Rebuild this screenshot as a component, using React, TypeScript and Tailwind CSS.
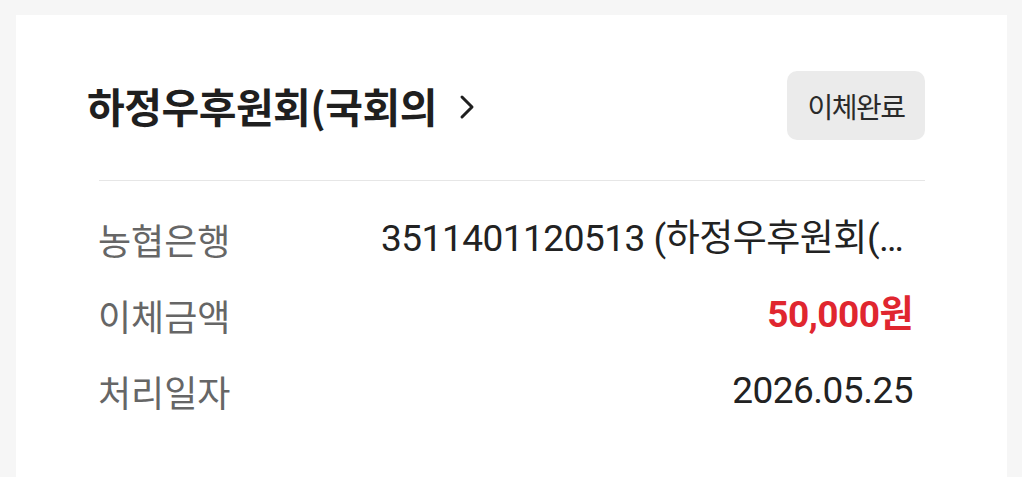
import React from 'react';

interface DetailRow {
  label: string;
  value: string;
  highlight?: boolean;
}

const rows: DetailRow[] = [
  { label: '농협은행', value: '3511401120513 (하정우후원회(국회의원 하정우))' },
  { label: '이체금액', value: '50,000원', highlight: true },
  { label: '처리일자', value: '2026.05.25' },
];

const ChevronRight: React.FC = () => (
  <svg width="20" height="28" viewBox="0 0 20 28" fill="none" className="ml-[20px] mt-[2px]">
    <path d="M5 4l10 10-10 10" stroke="#1f1f1f" strokeWidth="3" strokeLinecap="round" strokeLinejoin="round" />
  </svg>
);

const App: React.FC = () => {
  return (
    <div className="min-h-screen bg-[#f6f6f6] pt-[15px] pl-[16px] pr-[15px]">
      <div className="bg-white min-h-[480px] pt-[56px] pb-[60px]">
        {/* Header */}
        <div className="flex items-center justify-between pl-[71px] pr-[82px]">
          <button className="flex items-center">
            <span
              className="text-[41px] font-bold text-[#1f1f1f] tracking-[-0.5px] leading-none"
              style={{ fontFamily: '"Noto Sans CJK KR", "Noto Sans", sans-serif' }}
            >
              하정우후원회(국회의
            </span>
            <ChevronRight />
          </button>
          <span
            className="flex items-center justify-center w-[138px] h-[69px] rounded-[10px] bg-[#ebebeb] text-[28px] text-[#2a2a2a] tracking-[-1.5px]"
            style={{ fontFamily: '"Noto Sans CJK KR", "Noto Sans", sans-serif' }}
          >
            이체완료
          </span>
        </div>

        <div className="ml-[83px] mr-[82px] mt-[40px] h-[1px] bg-[#e6e6e6]" />

        {/* Transfer details */}
        <div className="mt-[20px] pl-[82px] pr-[94px]">
          {rows.map((row) => (
            <div key={row.label} className="flex items-center justify-between h-[76px]">
              <span
                className="text-[36px] text-[#666666] leading-[1.3] shrink-0"
                style={{ fontFamily: '"Noto Sans CJK KR", "Noto Sans", sans-serif' }}
              >
                {row.label}
              </span>
              <span
                className={`w-[532px] truncate text-right text-[37px] leading-[1.3] tracking-[-0.5px] ${
                  row.highlight ? 'font-bold text-[#e0262f]' : 'text-[#222222]'
                }`}
                style={{ fontFamily: 'Roboto, "Noto Sans CJK KR", sans-serif' }}
              >
                {row.value}
              </span>
            </div>
          ))}
        </div>
      </div>
    </div>
  );
};

export default App;
